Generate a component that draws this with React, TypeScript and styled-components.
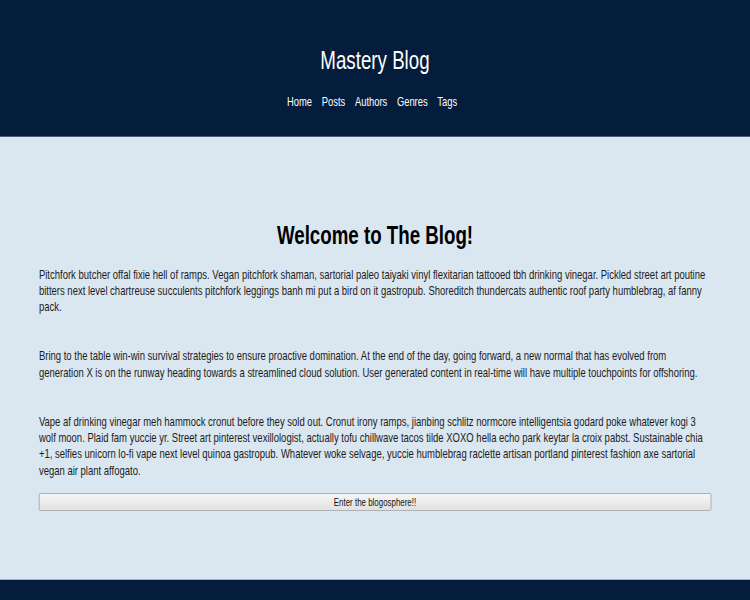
import React from "react";
import styled, { createGlobalStyle } from "styled-components";

const SQUEEZE = 0.72;

const Global = createGlobalStyle`
  html, body { margin: 0; padding: 0; overflow: hidden; }
  body {
    background: #dae6f0;
    font-family: "Liberation Sans", Arial, sans-serif;
    color: #111;
  }
`;

/* The reference is a horizontally compressed capture: the page is laid out
   wider and squeezed back to the window width. */
const Page = styled.div`
  width: calc(100vw / ${SQUEEZE});
  transform: scaleX(${SQUEEZE});
  transform-origin: 0 0;
`;

const Header = styled.header`
  height: 137px;
  box-sizing: border-box;
  background: #041d3c;
  border-bottom: 1px solid #4d5d78;
  display: flex;
  flex-direction: column;
  align-items: center;
  padding-top: 44px;
`;

const Title = styled.h1`
  margin: 0;
  color: #fff;
  font-weight: normal;
  font-size: 26px;
  line-height: 32px;
`;

const Nav = styled.nav`
  display: flex;
  gap: 13.5px;
  margin-top: 18px;
  padding-right: 8px;
`;

const NavLink = styled.a`
  color: #fff;
  font-size: 13px;
  line-height: 15px;
  text-decoration: none;
`;

const Main = styled.main`
  height: 442px;
  box-sizing: border-box;
  padding: 83px 54px 0;
  display: flex;
  flex-direction: column;
`;

const Heading = styled.h2`
  margin: 0 0 16.5px;
  text-align: center;
  font-size: 26px;
  line-height: 30px;
  font-weight: bold;
  color: #000;
`;

const Para = styled.p`
  margin: 0 0 32.5px;
  font-size: 13.2px;
  line-height: 16.4px;
  color: #1c1c1c;
  &:last-of-type { margin-bottom: 13.5px; }
`;

const EnterButton = styled.button`
  width: 100%;
  height: 18px;
  padding: 0;
  font-family: inherit;
  font-size: 11px;
  color: #111;
  border: 1px solid #a7a9ad;
  border-radius: 2px;
  background: linear-gradient(#f6f6f6, #e1e1e1);
`;

const Footer = styled.footer`
  height: 30px;
  background: #041d3c;
  border-top: 1px solid #9fb0c4;
`;

export default function App() {
  return (
    <>
      <Global />
      <Page>
        <Header>
          <Title>Mastery Blog</Title>
          <Nav>
            {["Home", "Posts", "Authors", "Genres", "Tags"].map((l) => (
              <NavLink key={l} href="#">{l}</NavLink>
            ))}
          </Nav>
        </Header>
        <Main>
          <Heading>Welcome to The Blog!</Heading>
          <Para>
            Pitchfork butcher offal fixie hell of ramps. Vegan pitchfork shaman, sartorial paleo taiyaki vinyl flexitarian tattooed tbh drinking vinegar. Pickled street art poutine bitters next level chartreuse succulents pitchfork leggings banh mi put a bird on it gastropub. Shoreditch thundercats authentic roof party humblebrag, af fanny pack.
          </Para>
          <Para>
            Bring to the table win-win survival strategies to ensure proactive domination. At the end of the day, going forward, a new normal that has evolved from generation X is on the runway heading towards a streamlined cloud solution. User generated content in real-time will have multiple touchpoints for offshoring.
          </Para>
          <Para>
            Vape af drinking vinegar meh hammock cronut before they sold out. Cronut irony ramps, jianbing schlitz normcore intelligentsia godard poke whatever kogi 3 wolf moon. Plaid fam yuccie yr. Street art pinterest vexillologist, actually tofu chillwave tacos tilde XOXO hella echo park keytar la croix pabst. Sustainable chia +1, selfies unicorn lo-fi vape next level quinoa gastropub. Whatever woke selvage, yuccie humblebrag raclette artisan portland pinterest fashion axe sartorial vegan air plant affogato.
          </Para>
          <EnterButton>Enter the blogosphere!!</EnterButton>
        </Main>
        <Footer />
      </Page>
    </>
  );
}
